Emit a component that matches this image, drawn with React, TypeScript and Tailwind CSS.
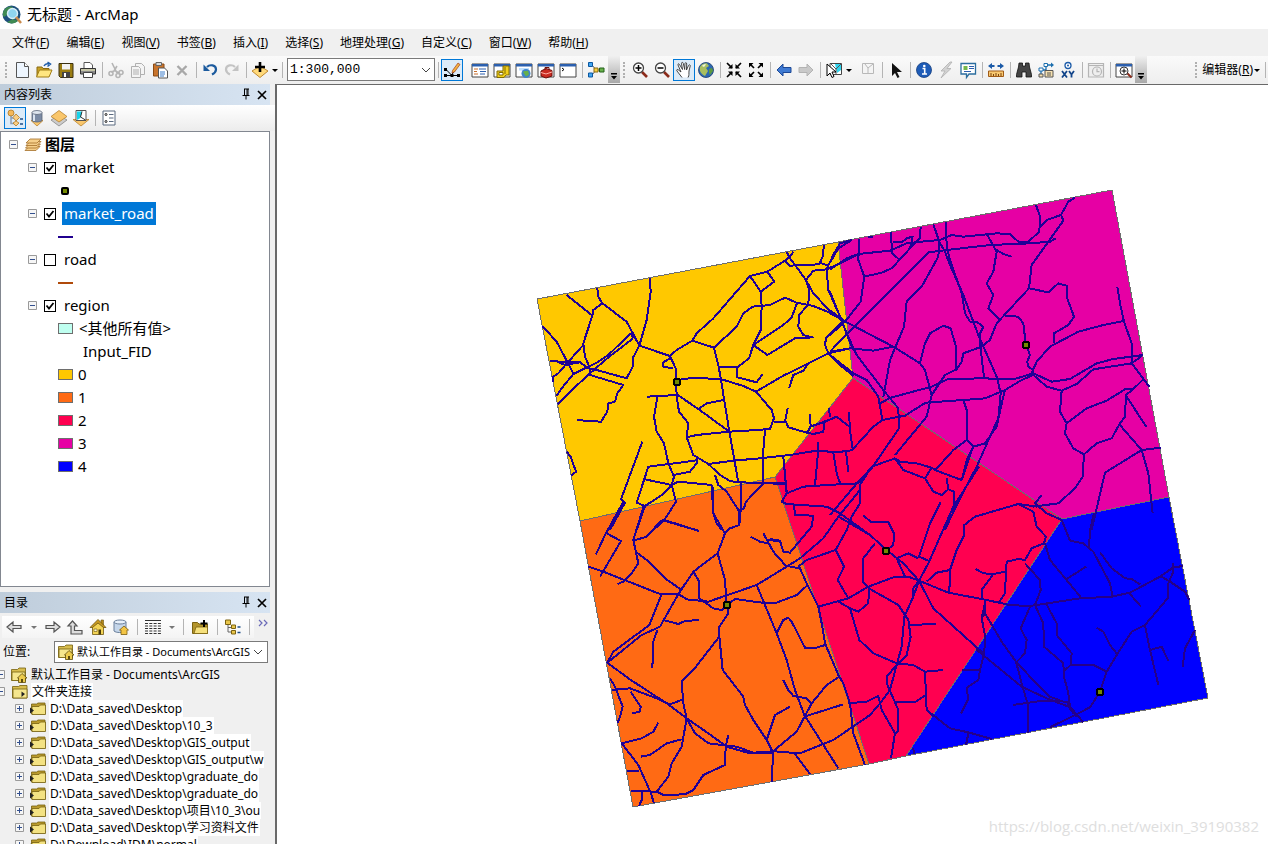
import React, { useState } from 'react';
import type { ReactNode } from 'react';

interface Layer {
  name: string;
  visible: boolean;
  symbol?: ReactNode;
}

const uiFont = "font-['Noto_Sans','Noto_Sans_CJK_SC',sans-serif]";

const menus = [
  ['文件', 'F'],
  ['编辑', 'E'],
  ['视图', 'V'],
  ['书签', 'B'],
  ['插入', 'I'],
  ['选择', 'S'],
  ['地理处理', 'G'],
  ['自定义', 'C'],
  ['窗口', 'W'],
  ['帮助', 'H']
];

const classes = [
  { label: '0', color: '#ffc800' },
  { label: '1', color: '#ff6a14' },
  { label: '2', color: '#ff0050' },
  { label: '3', color: '#e600a4' },
  { label: '4', color: '#0000ff' }
];

const folders = [
  { id: 1, path: 'D:\\Data_saved\\Desktop' },
  { id: 2, path: 'D:\\Data_saved\\Desktop\\10_3' },
  { id: 3, path: 'D:\\Data_saved\\Desktop\\GIS_output' },
  { id: 4, path: 'D:\\Data_saved\\Desktop\\GIS_output\\w' },
  { id: 5, path: 'D:\\Data_saved\\Desktop\\graduate_do' },
  { id: 6, path: 'D:\\Data_saved\\Desktop\\graduate_do' },
  { id: 7, path: 'D:\\Data_saved\\Desktop\\项目\\10_3\\ou' },
  { id: 8, path: 'D:\\Data_saved\\Desktop\\学习资料文件' },
  { id: 9, path: 'D:\\Download\\IDM\\normal' }
];

const windowFrame = (
  <>
    <path d="M0 2h16v13H0z" fill="#fff" stroke="#444" />
    <path d="M0 2h16v2.500H0z" fill="#2b5fae" />
  </>
);

const icons: Record<string, ReactNode> = {
  new: (
    <>
      <path d="M2.500 .5h8l4 4v11h-12z" fill="#eef6ff" stroke="#555" />
      <path d="M10.500 .5v4h4" fill="#fff" stroke="#555" />
    </>
  ),
  open: (
    <>
      <path d="M1 5h5l1 1.500h6V14H1z" fill="#c9a227" stroke="#8a6a10" />
      <path d="M3.500 8H16l-3 7H.5z" fill="#ffe680" stroke="#a07c14" />
      <path d="M8 4c1-2 3-2.500 5-2M11.500 0l3 2-3 2.500" fill="none" stroke="#1d5ba8" strokeWidth="1.500" />
    </>
  ),
  save: (
    <>
      <path d="M1 1.500h14v14H2.500L1 14z" fill="#9a7d12" stroke="#3a3010" />
      <path d="M4 2h8v5.500H4z" fill="#f2f2f2" />
      <path d="M4 10h8v5.500H4z" fill="#444" />
      <path d="M6 11h2v4H6z" fill="#fff" />
    </>
  ),
  print: (
    <>
      <path d="M4 7V.5h6l2.500 2.500v4" fill="#fff" stroke="#555" />
      <path d="M.5 6.500h15V12H.5z" fill="#8b8b8b" stroke="#333" />
      <path d="M1 8h14" stroke="#d8d8b0" strokeWidth="1.500" />
      <path d="M3.500 10.500h9v5h-9z" fill="#fff" stroke="#444" />
    </>
  ),
  cut: (
    <g fill="none" stroke="#b5b5b5" strokeWidth="1.600">
      <path d="M4 1l5 10M9 4L6 9l-3 1M6 8l5 3" />
      <circle cx="3" cy="11.500" r="2" />
      <circle cx="13" cy="10.500" r="2" />
      <circle cx="10" cy="13.500" r="2" />
    </g>
  ),
  copy: (
    <g fill="#f4f4f4" stroke="#b0b0b0">
      <path d="M5.500 1.500h6l3 3v8h-9z" />
      <path d="M1.500 4.500h7l2 2v9h-9zM3 8h6M3 10h6M3 12h6" />
    </g>
  ),
  paste: (
    <>
      <path d="M1.500 2h10.500v12H1.500z" fill="#c8742c" stroke="#8a4a14" />
      <path d="M4 .5h5.500v3H4z" fill="#ddd" stroke="#666" />
      <path d="M6.500 6h6l3 3v7h-9z" fill="#fff" stroke="#555" />
      <path d="M8 10h5M8 12h5M8 14h4" stroke="#3d7cc9" />
    </>
  ),
  remove: <path d="M3.500 4l9 9M12.500 4l-9 9" stroke="#a8a8a8" strokeWidth="2.400" />,
  undo: (
    <>
      <path d="M5 5c3-3 9-2 9 2.500 0 2.500-2 4-4 5" fill="none" stroke="#1c5b9e" strokeWidth="2.200" />
      <path d="M1.500 2.500V9H8z" fill="#1c5b9e" />
    </>
  ),
  redo: (
    <>
      <path d="M11 5C8 2 2 3 2 7.500c0 2.500 2 4 4 5" fill="none" stroke="#c3c3c3" strokeWidth="2.200" />
      <path d="M14.500 2.500V9H8z" fill="#c3c3c3" />
    </>
  ),
  add: (
    <>
      <path d="M0 9l8-5 8 5-8 6.500z" fill="#ffd97a" stroke="#c08a32" />
      <path d="M8 0v10M3 5h10" stroke="#000" strokeWidth="2.600" />
    </>
  ),
  editor: (
    <>
      <path d="M1.500 7l6 6 3-4M2 13.500h12" stroke="#000" fill="none" />
      <path d="M8.500 8.500L14 1l2 1.500-5.500 7.500-2.500 1z" fill="#f4b342" stroke="#a13c1a" strokeWidth=".7" />
      <path d="M0 6h3v3H0zM0 12h3v3H0zM6.500 12h3v3h-3zM13 12h3v3h-3z" fill="#000" />
    </>
  ),
  contents: (
    <>
      {windowFrame}
      <path d="M2 7h4M2 9.500h3M2 12h4" stroke="#c96f2c" />
      <path d="M7 7h7M8 9.500h6M8 12h5" stroke="#2b5fae" />
    </>
  ),
  catalog: (
    <>
      {windowFrame}
      <path d="M9 4h6v9h-3l-2 2.500H3V9h6z" fill="#f2cf1d" stroke="#806b00" />
      <path d="M5 10.500h4v2.500H5zM11 5v7" fill="#fff" stroke="#806b00" />
    </>
  ),
  search: (
    <>
      {windowFrame}
      <path d="M3 6h10v2.500H3z" fill="#bfe0ff" />
      <circle cx="10" cy="11.500" r="4.500" fill="#3f84c9" />
      <path d="M7 10c2-2 3 0 5-1.500l1 4-3 2z" fill="#67b04a" />
    </>
  ),
  toolbox: (
    <>
      {windowFrame}
      <path d="M3 9l5-2.500 6 2V14l-6 2-5-2z" fill="#c92b22" stroke="#6d0f0b" />
      <path d="M7 8V5.500h4V8" fill="none" stroke="#6d0f0b" />
      <path d="M3 10.500l5 1.500 6-2" stroke="#ffb0a5" fill="none" />
    </>
  ),
  python: (
    <>
      {windowFrame}
      <path d="M2 6l2 1.500L2 9" fill="none" stroke="#000" />
    </>
  ),
  model: (
    <>
      <path d="M4 3l4 5-4 5M8 8h5" fill="none" stroke="#555" />
      <path d="M.5 .5h4v4h-4zM.5 11h4v4h-4z" fill="#42a5f0" stroke="#0b57a0" />
      <path d="M6 6h4v4H6z" fill="#f5cc3c" stroke="#8a6a10" />
      <path d="M11.500 6H16v4h-4.500z" fill="#67b04a" stroke="#24601a" />
    </>
  ),
  zoomIn: (
    <>
      <path d="M10 10l5 5" stroke="#8b2b1b" strokeWidth="2.600" />
      <circle cx="6.500" cy="6" r="5" fill="#fff" stroke="#444" strokeWidth="1.300" />
      <path d="M3.500 6h6M6.500 3v6" stroke="#000" strokeWidth="1.500" />
    </>
  ),
  zoomOut: (
    <>
      <path d="M10 10l5 5" stroke="#8b2b1b" strokeWidth="2.600" />
      <circle cx="6.500" cy="6" r="5" fill="#fff" stroke="#444" strokeWidth="1.300" />
      <path d="M3.500 6h6" stroke="#000" strokeWidth="1.500" />
    </>
  ),
  pan: (
    <path
      d="M6 15.500L1 9c-1-1.500.5-2 1.500-1L5 10 2 3c-.3-1.500 1-1.500 1.500-.5l3 5-1-6c0-1.500 1.500-1.500 1.800 0l1.400 6L9 1.500c.3-1.500 1.800-1 1.700.5L10.500 8l2-4.500c.7-1.300 2-.7 1.700.6L13 9c-.3 3 .5 4-1 6.500"
      fill="#fff"
      stroke="#333"
      strokeWidth=".9"
    />
  ),
  globe: (
    <>
      <circle cx="8" cy="8" r="7.500" fill="#2d68b2" stroke="#1b3b6b" strokeWidth=".8" />
      <path d="M2 5c2-4 6-4 7-3.500l2 2.500-3 2 2 3-3 5C3 12 1 9 2 5z" fill="#a9bf5e" />
      <path d="M11 7l3-1 1 3-3 4-1-2z" fill="#5d9a3e" />
      <path d="M4 4c1-1.500 3-2 4-1.500L6 5z" fill="#eef4dc" />
    </>
  ),
  fixedIn: (
    <>
      <path d="M1 1l5 5M15 1l-5 5M1 15l5-5M15 15l-5-5" stroke="#000" strokeWidth="1.700" />
      <path d="M6.500 2v4.500H2zM9.500 2v4.500H14zM6.500 14V9.500H2zM9.500 14V9.500H14z" />
    </>
  ),
  fixedOut: (
    <>
      <path d="M2 2l4 4M14 2l-4 4M2 14l4-4M14 14l-4-4" stroke="#000" strokeWidth="1.700" />
      <path d="M1 5.500V1h4.500zM15 5.500V1h-4.500zM1 10.500V15h4.500zM15 10.500V15h-4.500z" />
    </>
  ),
  prev: <path d="M1 8l6-6v3.500h8v5H7V14z" fill="#3f7ad2" stroke="#1c4896" />,
  next: <path d="M15 8L9 2v3.500H1v5h8V14z" fill="#c9c9c9" stroke="#b3b3b3" />,
  select: (
    <>
      <path d="M4 1.500h11.500v11H4z" fill="#fff" stroke="#444" />
      <path d="M9 2h6v6l-4 3z" fill="#2fd4ee" />
      <path d="M5 2l5 5 5-5M10 7v5" fill="none" stroke="#555" />
      <path d="M1 2v12l3-3 2 4.500 2-1L6 10h4z" fill="#fff" stroke="#000" />
    </>
  ),
  clear: <path d="M2.500 1.500h11v10h-11zM5 2l3 4 5-4M8 6v5" fill="#f4f4f4" stroke="#b8b8b8" />,
  pointer: <path d="M4 1v13l3-3 2.500 5 2-1-2.500-5H14z" fill="#111" />,
  info: (
    <>
      <circle cx="8" cy="8" r="7.500" fill="#1e5cb8" stroke="#143d7d" strokeWidth=".8" />
      <circle cx="8.300" cy="4" r="1.300" fill="#fff" />
      <path d="M6.500 6.500h2.200V12M6 12h5" fill="none" stroke="#fff" strokeWidth="1.600" />
    </>
  ),
  bolt: <path d="M12 0L3 9h4l-4 7 10-9.500H9L14 0z" fill="#d2d2d2" stroke="#b0b0b0" strokeWidth=".8" />,
  popup: (
    <>
      <path d="M1 1.500h14.500V12H9l-2.500 3.500V12H1z" fill="#fff" stroke="#2b6d9e" strokeWidth="1.300" />
      <path d="M3.500 4h4v4h-4z" fill="#74b74a" />
      <path d="M9 4.500h5M9 6.500h5M4 9.500h7" stroke="#2b5fae" />
    </>
  ),
  measure: (
    <>
      <path d="M2 4h4.500M9.500 4H14" stroke="#1c5ba8" strokeWidth="1.800" />
      <path d="M0 4l4-3v6zM16 4l-4-3v6z" fill="#1c5ba8" />
      <path d="M.5 9h15v5.500H.5z" fill="#f8c870" stroke="#a05b18" />
      <path d="M3 11v3M5.500 12v2M8 11v3M10.500 12v2M13 11v3" stroke="#7c430c" />
    </>
  ),
  find: (
    <path
      d="M3 1h3.500v3h3V1H13l.5 4 2 7.500V15H10v-5H6v5H.5v-2.500L2.500 5z"
      fill="#444"
      stroke="#111"
      strokeWidth=".8"
    />
  ),
  route: (
    <>
      <path d="M3 13V8H8V3h6" fill="none" stroke="#1c6fae" strokeWidth="1.300" />
      <path d="M13 .5L16 3l-3 2.500z" fill="#1c6fae" />
      <path d="M1 6h4v3H1zM6 1.500h3.500v3H6z" fill="#fff" stroke="#1c6fae" />
      <path d="M7 8.500h8V15H7zM1 12h4v3H1z" fill="#f6e1b0" stroke="#555" />
      <path d="M9 11h4M9 13h4" stroke="#555" />
    </>
  ),
  xy: (
    <>
      <circle cx="8" cy="3.500" r="3" fill="#fff" stroke="#1c5ba8" strokeWidth="1.300" />
      <circle cx="8" cy="3.500" r="1" fill="#1c5ba8" />
      <path d="M2 9l5 6.500M7 9l-5 6.500M9 9l2.500 3.500L14 9M11.500 12v3.500" stroke="#12458a" strokeWidth="1.800" fill="none" />
    </>
  ),
  time: (
    <g fill="#eee" stroke="#b5b5b5" strokeWidth="1.200">
      <path d="M.5 1.500h15V15H.5zM.5 3.500h15" />
      <circle cx="9" cy="9.500" r="4.500" />
      <path d="M9 6.500v3.200h2.500" />
    </g>
  ),
  viewer: (
    <>
      {windowFrame}
      <path d="M11 11l4.500 4.500" stroke="#8b2b1b" strokeWidth="2" />
      <circle cx="8" cy="9" r="4" fill="#fff" stroke="#333" />
      <path d="M5.500 9h5M8 6.500v5" stroke="#000" />
    </>
  ),
  drawingOrder: (
    <>
      <path d="M4 5v8.500h5M4 8h5" fill="none" stroke="#8aa0b8" strokeWidth="1.500" />
      <circle cx="4" cy="3" r="3" fill="#f5b95a" stroke="#b37a22" strokeWidth=".8" />
      <path d="M9 4l3.500 3.500L9 11 6 7.500zM9 11l3 2-3 3-3-3z" fill="#f9cf85" stroke="#b37a22" strokeWidth=".8" />
      <path d="M13 9h3M13 14h3" stroke="#1c4d86" strokeWidth="1.500" />
    </>
  ),
  source: (
    <>
      <path d="M2 10.500h12L8 16z" fill="#f9c66b" stroke="#b98330" strokeWidth=".8" />
      <path d="M3 2.500v8c2 2 8 2 10 0v-8z" fill="#7b8ba5" stroke="#5a6577" strokeWidth=".8" />
      <path d="M5 3v8" stroke="#dbe4f0" strokeWidth="2" />
      <ellipse cx="8" cy="2.500" rx="5" ry="2" fill="#dfe6ef" stroke="#5a6577" strokeWidth=".8" />
    </>
  ),
  visibility: (
    <>
      <path d="M0 10l8-5 8 5-8 6z" fill="#ccc" stroke="#888" strokeWidth=".8" />
      <path d="M0 6.500L8 .5l8 6L8 12z" fill="#f9c66b" stroke="#b98330" strokeWidth=".8" />
    </>
  ),
  selection: (
    <>
      <path d="M0 9.500h16L8 16z" fill="#f9c66b" stroke="#b98330" strokeWidth=".8" />
      <path d="M3 .5h10v10H3z" fill="#fff" stroke="#555" />
      <path d="M4 1.500h5L7.500 8 4 10z" fill="#19d3ea" />
      <path d="M9 1.500L7.500 7l5 3" fill="none" stroke="#333" />
    </>
  ),
  options: (
    <>
      <path d="M2 1h12v14H2z" fill="#fff" stroke="#5a6a80" />
      <path d="M8 4.500h4.500M8 8h4.500M8 11.500h4.500" stroke="#5a6a80" />
      <g fill="none" stroke="#222">
        <circle cx="5" cy="4.500" r="1" />
        <circle cx="5" cy="11.500" r="1" />
      </g>
    </>
  ),
  layers: (
    <g fill="#f6cf8a" stroke="#a5702a" strokeWidth=".8">
      <path d="M0 13.500l4-4h11l-4 4z" />
      <path d="M.5 11l4-4h11l-4 4z" />
      <path d="M1 8.500l4-4h11l-4 4z" />
      <path d="M1 6l4-4h11l-4 4z" />
    </g>
  ),
  back: <path d="M1 8l6-5v3.500h8v3H7V13z" fill="#ddd" stroke="#555" strokeWidth="1.200" />,
  forward: <path d="M15 8L9 3v3.500H1v3h8V13z" fill="#ddd" stroke="#555" strokeWidth="1.200" />,
  up: <path d="M5.500 2L10 7H7.500v4.500H15V15H4V7H1z" fill="#ddd" stroke="#555" strokeWidth="1.200" />,
  home: (
    <>
      <path d="M11 1h2.500v5H11z" fill="#b78a1a" stroke="#6d5510" strokeWidth=".6" />
      <path d="M2.500 7L8 2.500 13.500 7v8.500h-11z" fill="#f3d455" stroke="#6d5510" strokeWidth=".8" />
      <path d="M0 8.500L8 .5l8 8h-2.500L8 4 2.500 8.500z" fill="#c99a20" stroke="#6d5510" strokeWidth=".8" />
      <path d="M8.500 10.500h2.500v5H8.500z" fill="#4a3a0a" />
      <path d="M4 10h3v2.500H4z" fill="#fff8d0" stroke="#6d5510" strokeWidth=".6" />
    </>
  ),
  database: (
    <>
      <path d="M1 3v9c2 2 9 2 12 0V3z" fill="#c5d6ea" stroke="#6a7f9a" />
      <ellipse cx="7" cy="3" rx="6" ry="2" fill="#e8f0fa" stroke="#6a7f9a" />
      <path d="M6.500 11L11 7l4.500 4H14v4.500H8V11z" fill="#f3c545" stroke="#7b5d10" strokeWidth=".8" />
    </>
  ),
  table: (
    <>
      <path d="M0 1.500h16" stroke="#333" />
      <path
        d="M0 4.500h16M0 7h16M0 9.500h16M0 12h16M0 14.500h16"
        stroke="#333"
        strokeWidth="1.200"
        strokeDasharray="3 1.300"
      />
    </>
  ),
  connect: (
    <>
      <path d="M.5 3.500h5L7 5h8.500v9.500H.5z" fill="#b3942a" stroke="#7b6210" />
      <path d="M2 14.500L4 8h11.500v6.500z" fill="#f5e07c" stroke="#7b6210" strokeWidth=".8" />
      <path d="M12 1v7M8.500 4.500h7" stroke="#000" strokeWidth="2" />
    </>
  ),
  tree: (
    <>
      <path d="M3 5v8h5M3 8.500h5" fill="none" stroke="#666" />
      <path d="M.5 1h5v4.500h-5zM6.500 6h4v3.500h-4zM6.500 11.500h4V15h-4z" fill="#e9c64b" stroke="#7b6210" />
      <path d="M12.500 8h3M12.500 13.500h3" stroke="#1c4d86" strokeWidth="1.500" />
    </>
  ),
  folder: (
    <>
      <path d="M1.500 3h5L8 2h7v11H1.500z" fill="#b99a2c" stroke="#75600f" strokeWidth=".8" />
      <path d="M2 5.500h7L10.500 4H15.500v9.500H2z" fill="#f3e283" stroke="#75600f" strokeWidth=".8" />
      <path d="M0 6.500l4 3-4 3z" fill="#222" />
    </>
  ),
  folderHome: (
    <>
      <path d="M.5 2.500h6L8 1h6.500v12.500H.5z" fill="#d8bd4e" stroke="#75600f" strokeWidth=".8" />
      <path d="M1 5h13v8.500H1z" fill="#f5e68d" stroke="#75600f" strokeWidth=".8" />
      <path d="M6.500 11L11 6.500 16 11h-1.500v4.500h-7V11z" fill="#eccb4c" stroke="#5c4a0c" strokeWidth=".8" />
      <path d="M10 12h2v3.500h-2z" fill="#5c4a0c" />
    </>
  ),
  folderLinks: (
    <>
      <path d="M.5 2.500h6L8 1.500h7V14H.5z" fill="#d8bd4e" stroke="#75600f" strokeWidth=".8" />
      <path d="M1 5h14v9H1z" fill="#f5e68d" stroke="#75600f" strokeWidth=".8" />
      <path d="M9.500 7.500l3.500 2.500-3.500 3z" fill="#222" />
    </>
  )
};

const roadSheets = [
  {
    transform: 'translate(530 230) scale(.33333)',
    d: `M110 195 187 257M202 175 205 200 217 220 190 240 187 257 160 340 165 380 178 410 180 435 280 465 262 490 255 515 235 520 232 545 213 575 175 573 142 570
    M217 220 290 275 328 347 420 378 437 415 440 500 447 545 475 580 470 622 490 675 535 702 570 735 600 753 625 757 765 760
    M360 145 362 185 350 270 328 347 308 385 308 410 290 445 200 420 175 415 150 397 118 395 90 397 78 392 60 392
    M37 288 80 335 110 392 130 430M160 345 115 395 85 430 70 440 68 455M78 393 105 405 150 397
    M302 310 235 375 200 398 130 432 95 475 80 497M310 325 240 378 205 408 178 432 120 485 83 522M302 310 310 325
    M420 378 440 360 487 332 552 353 567 415 573 450 598 605 625 757M487 332 500 310 550 265 660 138 712 125 765 92 778 82 790 66M770 66 778 82
    M660 138 692 185 695 228 692 300 670 345 657 385 622 412 567 412M712 125 733 155 692 185
    M552 353 620 290 640 250 668 230 720 225 765 203 800 218 850 228 930 260M670 345 760 285 785 262 800 222
    M670 345 712 375 795 325 848 322 820 315 805 290 808 255 835 222 838 180 828 150 850 122 890 118
    M778 82 828 150 850 190 895 238 940 270M765 92 780 107 865 103 870 98 895 107 912 70 930 40 965 30
    M882 45 878 80 870 98M895 107 890 118 895 180 930 260 965 350M890 118 940 95 985 72
    M443 450 490 443 575 448 640 468 678 485 725 540 732 565 720 597 650 602 598 605 500 615 470 622
    M678 485 760 437 830 403 895 370 960 355M832 405 820 422 790 435 777 475M895 370 885 345 888 325 940 270
    M895 370 930 405 970 438M620 412 622 442 680 457 697 433M443 495 505 537 598 605M580 510 530 520 505 537
    M352 500 443 495M382 502 372 560 380 605 402 640 415 700 432 740 425 765 438 815 403 870 370 900M420 385 398 398 400 410 430 415
    M732 577 768 575 775 592 830 608 850 612 880 605 885 570M773 535 765 575M840 553 842 590 830 608
    M705 600 700 660 700 757M535 702 610 692 690 685 780 675 860 662M760 680 770 785
    M355 710 495 692 502 685 500 700 480 725 432 735M355 710 320 818 345 828 320 900
    M345 748 425 765 445 755 545 765 550 850 560 880 575 900M425 765 400 792 345 828M337 635 273 808 285 818 240 900
    M555 735 565 765 590 785 625 840 642 835 648 815 700 760M632 757 632 840 628 885 595 897M110 665 122 680 138 725 122 737M403 870 498 900`
  },
  {
    transform: 'translate(830 180) scale(.33333)',
    d: `M0 248 25 205 65 180M0 268 50 235 85 222 180 212 230 190 275 185 330 180 365 165 400 170 500 160 540 162 565 185 595 185 628 155 630 110 618 75
    M88 178 85 240 103 290 92 365 45 425 0 465M103 290 155 278 185 265 240 205 248 170 230 175 215 187 190 185M182 157 187 220 207 238
    M272 140 270 175 240 205M115 171H130M0 515 50 462 295 217 350 210 480 195 600 190 660 185 677 175
    M310 133 328 185 345 215 360 255 400 345 445 465 500 590 512 640 505 715 480 770 440 860 375 985 345 1050
    M348 125 350 200 360 240 395 340 405 400 420 425M328 185 325 230 275 320 230 365 222 440 180 540 160 650
    M420 425 440 425 460 440 450 460 450 490 462 592M472 165 500 215 490 275 470 310 490 345 475 385 510 420M500 210 520 222 545 230
    M735 53 715 65 693 105 650 120 630 140M693 105 700 122 605 255 597 325 500 430 480 480 455 500 400 520 395 545 380 568 345 585 305 645
    M597 325 655 337 685 310 712 318 710 350 732 410 715 435 672 460 672 490M525 407 565 410 580 430 587 490 600 525 592 545 595 560 610 570
    M0 400 75 440 190 500 270 550 285 570 305 645 290 710 195 825M0 515 60 505 130 512 190 500
    M0 335 50 460 80 525 160 630 205 685 207 745 125 865 85 905 0 1005M0 525 70 580 110 600 145 650 157 720
    M270 550 285 490 300 460 340 437 362 445 378 500 378 568M150 670 182 653 305 620 355 597 460 595 550 598 610 580 665 605 720 597 800 550 850 537 940 525
    M287 668 400 660 465 655 525 630 575 600 610 585 650 620 695 632 740 612 790 568 905 550 958 620M905 550 935 528
    M605 580 620 545 660 500 745 455 820 435 880 423M862 320 870 370 882 425 905 490 905 550
    M695 632 690 695 710 730 705 760 730 805 762 823 758 890 735 925 685 970 610 980M710 730 770 685 830 662 885 628 910 627 940 598
    M910 627 888 645 885 710 868 733 845 775 800 790 762 823M890 650 950 742M868 733 935 810 992 803M935 810 825 878 785 1050M935 810 955 880 968 1000
    M157 720 225 707 287 668M157 720 130 740 68 808M400 660 410 690 410 780 430 800 465 790 500 740 520 650 525 630
    M410 780 370 810 318 868M430 800 410 840 395 900`
  },
  {
    transform: 'translate(570 470) scale(.33333)',
    d: `M160 95 105 195 78 253M110 190 153 213 90 320M222 105 190 210 205 280 185 310 160 335 143 342
    M55 290 100 305 270 372 325 372M197 245 230 270 285 325 335 360M275 150 230 200 190 212M275 150 388 183
    M465 190 430 130 430 50M508 120 508 165 480 175 465 190 443 250 370 305 325 372 270 470
    M443 250 465 330 470 405 475 430 448 470 448 500 370 600 335 635 340 700 350 745M370 305 388 335 388 385 430 415 455 420 470 405
    M325 372 350 388 415 395 560 345 650 290M470 405 495 387 590 400 620 398 680 375 713 345
    M275 372 238 465 130 545 112 578 215 495 270 470M280 450 325 462 345 453 388 450M262 480 250 515 247 595
    M448 500 458 600 520 680 525 705 550 750 590 810 608 845M112 578 175 625 290 700 350 745 415 790 470 830 540 850 608 850
    M350 745 375 790 415 820 500 830 550 848 608 845M125 660 180 655 260 685 300 703 340 688
    M120 625 135 650 158 710 150 740 142 760M182 665 212 710 210 725 187 730M155 820 215 805 250 785 265 758
    M155 820 205 885 243 970 252 1000M170 903 208 903M350 745 335 830 305 880 295 920 260 965M335 808 290 820 240 855 212 860
    M182 963 260 965 280 975 345 973 370 960 400 915 465 885 467 830 475 795M215 967 215 990 207 1008
    M560 345 620 490 650 570 675 660 703 735 805 895M620 490 640 450 655 443 665 455 705 533 740 533 765 525
    M608 845 607 935M590 810 615 735 660 710M608 845 680 785 725 700 710 685 670 678 655 660 640 630
    M703 740 820 703M725 700 770 645 808 620M675 852 720 912M542 200 570 215 595 220M580 190 610 245 650 290M590 210 630 213`
  },
  {
    transform: 'translate(770 370) scale(.33333)',
    d: `M375 265 390 275 440 280 485 293 500 302 575 330 608 232M375 265 400 300 465 325 490 365 515 375 535 358 530 325
    M535 358 552 365 552 405M485 293 465 325M627 290 550 410 475 580 447 632 430 680 403 740 395 830 380 885 360 960 330 1000 300 1035 190 1110 90 1150 0 1143
    M512 397 480 460 447 560 475 572M375 265 305 290 265 340 170 345 100 350 50 370 35 395 50 402 170 410 210 430 300 495 350 540 400 580 447 632
    M305 290 270 345 270 400 245 440 230 480 197 540 222 590 203 630 235 685M50 590 90 565 160 505 205 440 270 360M85 590 110 570 197 540
    M72 405 75 435 130 437 125 470 60 548 40 545 30 512 0 507M50 588 90 595 110 640 145 710 155 760 165 820 205 915 220 940 240 1000 250 1090 285 1185
    M280 437 305 457 355 457 372 490 370 525 350 540M315 520 280 565 278 635 300 657 385 705 415 750 422 800 410 855 380 885 350 920 350 940 375 997 437 995 467 975
    M145 710 235 685 295 650 370 622 420 622 447 632 535 668 635 687 710 703M470 635 500 608 540 600 538 668
    M540 600 560 540 583 495 583 465 615 440 745 402 800 410M380 565 415 550 445 565M380 565 405 620
    M205 695 240 715 265 725 295 700 297 655M240 715 268 810 310 850 380 880 430 885 465 905 520 900M465 905 470 1020 490 1040
    M420 765 497 762M447 632 490 715 640 850M235 1000 290 995 325 978 335 1020 375 1090 363 1165M375 997 385 1020 383 1085 375 1090
    M0 340 45 343M40 260 50 370M145 242 200 247 250 240M143 215 143 260 135 345M190 250 200 310 212 345M228 245 235 305
    M237 127 240 180 248 238M113 190 120 170 165 155 200 140 238 170M177 115 180 140M205 440 240 460 300 495M430 680 430 655 447 632
    M745 402 790 425 800 470 828 500 822 520 785 535 765 570 745 567 710 575 708 605 670 612 640 610 617 597
    M670 612 635 660 635 687M708 605 705 670 685 700M815 375 795 400 830 430 875 450M645 690 645 730`
  }
];

const southEastRoads = `M515 120 540 182 580 190 610 215 660 310 668 350M612 100 600 150 597 205
  M465 190 480 240 575 355M530 297 588 260M630 217 665 265 705 295 725 297 750 313
  M350 375 420 378 570 355 665 350 720 338 810 290 850 262 880 258M720 342 753 380
  M848 250 850 275 835 310 833 355 765 435 725 455 680 525 650 575 630 635 600 682 555 705 480 742M815 290 840 305 885 335 898 360
  M405 250 450 300 452 330 435 375 460 430 462 500 520 550 522 590 535 640 540 680 580 727
  M468 370 500 430 500 465 545 520 542 555 520 575M542 555 610 555 650 575M420 380 392 445 410 480 405 520 378 548
  M620 443 640 455 660 495 682 523M765 435 780 510 805 615M780 510 815 500 835 543M915 450 885 505 878 560
  M285 400 335 485 378 545 395 610 415 680 415 760M258 508 395 620 470 655 535 680 560 710M378 545 420 590 480 650 520 665
  M368 675 460 662 530 665 550 700M285 370 275 415 285 465 283 520 270 570 265 600 232 622 233 660 213 700M215 570 270 570
  M110 690 180 745 235 757 305 777M235 760 228 795M70 805 72 822M285 400 275 415`;

const regions = [
  { points: '537,299 838,242 853,378 775,477 580,521', fill: '#ffc800' },
  { points: '580,521 775,477 869,764 633,807', fill: '#ff6a14' },
  { points: '853,378 1062,519 906,756 869,764 775,477', fill: '#ff0050' },
  { points: '838,242 1112,190 1169,497 1062,519 853,378', fill: '#e600a4' },
  { points: '1062,519 1169,497 1208,698 906,756', fill: '#0000ff' }
];

const markets = [
  [677, 382],
  [1026, 345],
  [886, 551],
  [727, 605],
  [1100, 692]
];

function Icon({ name }: { name: string }) {
  return (
    <svg viewBox="0 0 16 16" className="size-4 shrink-0 overflow-visible" aria-hidden="true">
      {icons[name]}
    </svg>
  );
}

function Tool({ name, active }: { name: string; active?: boolean }) {
  return (
    <button
      aria-label={name}
      className={`flex h-[22px] w-[22px] shrink-0 items-center justify-center border ${
        active ? 'border-[#0078d7] bg-[#dcebf8]' : 'border-transparent'
      }`}
    >
      <Icon name={name} />
    </button>
  );
}

function Separator() {
  return (
    <span className="flex h-4 w-[6px] shrink-0 justify-center">
      <span className="w-px bg-[#b4b4b4]" />
    </span>
  );
}

function Arrow({ faded }: { faded?: boolean }) {
  return (
    <svg viewBox="0 0 8 16" className="h-4 w-2 shrink-0">
      <path d="M1 7h6L4 10z" fill={faded ? '#777' : '#000'} />
    </svg>
  );
}

function Grip() {
  return <span className="mx-[3px] h-4 w-[3px] shrink-0 border-l-2 border-dotted border-[#b0b0b0]" />;
}

function Overflow() {
  return (
    <button
      aria-label="more"
      className="flex h-[27px] w-3 shrink-0 items-end justify-center bg-linear-to-b from-[#f0f0f0] to-[#a8a8a8]"
    >
      <svg viewBox="0 0 8 10" className="mb-[2px] h-[10px] w-2">
        <path d="M1 2h6v1.500H1zM1 5h6L4 8.500z" />
      </svg>
    </button>
  );
}

function Chevron() {
  return (
    <svg viewBox="0 0 10 10" className="pointer-events-none absolute top-1/2 right-1 size-[10px] -translate-y-1/2">
      <path d="M1 3l4 4 4-4" fill="none" stroke="#444" />
    </svg>
  );
}

function Toggle({ open }: { open?: boolean }) {
  return (
    <button aria-label={open ? 'collapse' : 'expand'} className="size-[9px] shrink-0">
      <svg viewBox="0 0 9 9" className="size-[9px]">
        <path d="M.5 .5h8v8h-8z" fill="#f6f6f6" stroke="#9a9a9a" />
        <path d={open ? 'M2 4.500h5' : 'M2 4.500h5M4.500 2v5'} stroke="#33508f" />
      </svg>
    </button>
  );
}

function PanelTitle({ title }: { title: string }) {
  return (
    <div className="mr-[5px] flex h-[21px] shrink-0 items-center bg-linear-to-r from-[#bfcddb] to-[#d7e4f2] pl-1 text-xs">
      <h2 className="flex-1">{title}</h2>
      <button aria-label="pin" className="size-4">
        <svg viewBox="0 0 16 16" className="size-4">
          <path d="M6 2h5M6.500 2v6M10 2v6M9 2v6M4.500 8.500h7M8 9v3.500" stroke="#000" fill="none" />
        </svg>
      </button>
      <button aria-label="close" className="size-4">
        <svg viewBox="0 0 16 16" className="size-4">
          <path d="M4 4l8 8M12 4l-8 8" stroke="#000" strokeWidth="1.700" />
        </svg>
      </button>
    </div>
  );
}

function LayerRow({ layer, selected, onSelect }: { layer: Layer; selected: boolean; onSelect: () => void }) {
  return (
    <li>
      <div className="flex h-[23px] items-center pl-[27px]">
        <Toggle open />
        <span className="relative ml-[7px] size-3 shrink-0">
          <input
            id={layer.name}
            type="checkbox"
            defaultChecked={layer.visible}
            className="peer block size-3 appearance-none border border-black bg-white"
          />
          <svg viewBox="0 0 12 12" className="pointer-events-none absolute inset-0 hidden size-3 peer-checked:block">
            <path d="M2.500 5.500l2.500 3 4.500-5.500" fill="none" stroke="#000" strokeWidth="1.800" />
          </svg>
        </span>
        <label
          htmlFor={layer.name}
          onClick={onSelect}
          className={`ml-[6px] px-[2px] leading-[23px] ${selected ? 'bg-[#0078d7] text-white' : ''}`}
        >
          {layer.name}
        </label>
      </div>
      {layer.symbol && <div className="flex h-[23px] items-center pl-[57px]">{layer.symbol}</div>}
    </li>
  );
}

const layers: Layer[] = [
  {
    name: 'market',
    visible: true,
    symbol: <span className="ml-[3px] size-2 rounded-xs border-2 border-black bg-[#738a00]" />
  },
  { name: 'market_road', visible: true, symbol: <span className="h-[2px] w-[15px] bg-[#20008f]" /> },
  { name: 'road', visible: false, symbol: <span className="h-[2px] w-[15px] bg-[#b04a0a]" /> },
  { name: 'region', visible: true }
];

function ContentsPanel() {
  const [selected, setSelected] = useState('market_road');

  return (
    <section className="flex h-[503px] shrink-0 flex-col">
      <PanelTitle title="内容列表" />
      <div className="flex h-[26px] shrink-0 items-center bg-linear-to-b from-white to-[#ececec] pl-1">
        <Tool name="drawingOrder" active />
        <Tool name="source" />
        <Tool name="visibility" />
        <Tool name="selection" />
        <Separator />
        <Tool name="options" />
      </div>
      <div className="mr-[5px] flex-1 border border-[#828790] bg-white pt-px text-[15px]">
        <div className="flex h-[23px] items-center pl-2 font-bold">
          <Toggle open />
          <span className="mr-1 ml-[7px] flex">
            <Icon name="layers" />
          </span>
          图层
        </div>
        <ul>
          {layers.map((layer) => (
            <LayerRow
              key={layer.name}
              layer={layer}
              selected={selected === layer.name}
              onSelect={() => setSelected(layer.name)}
            />
          ))}
        </ul>
        <div className="flex h-[23px] items-center pl-[57px] text-[15px]">
          <span className="mr-[6px] h-[11px] w-[15px] border border-[#6e6e6e] bg-[#bffff0]" />
          &lt;其他所有值&gt;
        </div>
        <div className="h-[23px] pl-[82px] text-[15px] leading-[23px]">Input_FID</div>
        {classes.map((item) => (
          <div key={item.label} className="flex h-[23px] items-center pl-[57px] text-[15px]">
            <span
              className="mr-[5px] h-[11px] w-[15px] border border-[#6e6e6e]"
              style={{ backgroundColor: item.color }}
            />
            {item.label}
          </div>
        ))}
      </div>
    </section>
  );
}

function CatalogPanel() {
  return (
    <section className="mt-[5px] flex min-h-0 flex-1 flex-col text-xs">
      <PanelTitle title="目录" />
      <div className="mt-[3px] flex h-[22px] shrink-0 items-center">
        <div className="ml-[2px] flex h-full w-[252px] items-center bg-linear-to-b from-white to-[#f4f4f4] pl-px">
          <Tool name="back" />
          <span className="mr-1 ml-[5px] flex">
            <Arrow faded />
          </span>
          <Tool name="forward" />
          <Tool name="up" />
          <span className="mx-px flex">
            <Tool name="home" />
          </span>
          <Tool name="database" />
          <span className="mx-[2px] flex">
            <Separator />
          </span>
          <Tool name="table" />
          <span className="mx-1 flex">
            <Arrow faded />
          </span>
          <Separator />
          <span className="mx-[3px] flex">
            <Tool name="connect" />
          </span>
          <Separator />
          <span className="mx-[2px] flex">
            <Tool name="tree" />
          </span>
          <Separator />
        </div>
        <button aria-label="more tools" className="ml-1">
          <svg viewBox="0 0 10 8" className="mb-2 h-2 w-[10px]">
            <path d="M1 1l3 3-3 3M6 1l3 3-3 3" fill="none" stroke="#6a6ab8" strokeWidth="1.200" />
          </svg>
        </button>
      </div>
      <div className="mt-[3px] mr-[7px] flex h-[22px] shrink-0 items-center pl-[3px]">
        <label htmlFor="location" className="w-[51px]">
          位置:
        </label>
        <div className="relative flex h-[22px] min-w-0 flex-1 items-center border border-[#7a7a7a] bg-white pl-[3px]">
          <Icon name="folderHome" />
          <select id="location" className="ml-[3px] h-full min-w-0 flex-1 appearance-none bg-transparent pr-4 text-[11px]">
            <option>默认工作目录 - Documents\ArcGIS</option>
          </select>
          <Chevron />
        </div>
      </div>
      <ul className="mt-[3px] mr-2 min-h-0 flex-1 overflow-hidden whitespace-nowrap">
        <li className="flex h-[17px] items-center">
          <span className="-ml-1 flex">
            <Toggle open />
          </span>
          <span className="mr-1 ml-[6px] flex">
            <Icon name="folderHome" />
          </span>
          默认工作目录 - Documents\ArcGIS
        </li>
        <li className="flex h-[17px] items-center">
          <span className="-ml-1 flex">
            <Toggle open />
          </span>
          <span className="mr-[3px] ml-[7px] flex">
            <Icon name="folderLinks" />
          </span>
          <span className="bg-white px-px leading-[17px]">文件夹连接</span>
        </li>
        {folders.map((folder) => (
          <li key={folder.id} className="flex h-[17px] items-center pl-[15px]">
            <Toggle />
            <span className="mr-[3px] ml-[6px] flex">
              <Icon name="folder" />
            </span>
            <span className="bg-white px-px leading-[17px]">{folder.path}</span>
          </li>
        ))}
      </ul>
    </section>
  );
}

function MapView() {
  return (
    <main className="relative min-w-0 flex-1 overflow-hidden border-t border-l-2 border-[#696969] bg-white">
      <svg viewBox="277 85 991 759" className="block w-full" role="img" aria-label="market_road">
        <g shapeRendering="crispEdges">
          {regions.map((region) => (
            <polygon key={region.fill} points={region.points} fill={region.fill} stroke="#6e6e6e" />
          ))}
          <g fill="none" strokeWidth="6" strokeLinejoin="round">
            <path d={southEastRoads} transform="translate(890 480) scale(.33333)" stroke="#250088" />
            {roadSheets.map((sheet) => (
              <path key={sheet.transform} d={sheet.d} transform={sheet.transform} stroke="#1f0096" />
            ))}
          </g>
          {markets.map(([x, y]) => (
            <g key={x}>
              <path d={`M${x - 3} ${y - 4}h6v1h1v6h-1v1h-6v-1h-1v-6h1z`} fill="#000" />
              <path d={`M${x - 2} ${y - 2}h4v4h-4z`} fill="#738a00" />
            </g>
          ))}
        </g>
      </svg>
      <p className="absolute right-[9px] bottom-[7px] font-['Open_Sans',sans-serif] text-[15px] leading-[22px] text-[#dedede]">
        https://blog.csdn.net/weixin_39190382
      </p>
    </main>
  );
}

function Toolbar() {
  return (
    <div className="flex h-7 shrink-0 items-center bg-linear-to-b from-[#fafafa] to-[#eeeeee] pb-px pl-[2px]">
      <Grip />
      <Tool name="new" />
      <Tool name="open" />
      <Tool name="save" />
      <Tool name="print" />
      <Separator />
      <Tool name="cut" />
      <Tool name="copy" />
      <Tool name="paste" />
      <Tool name="remove" />
      <Separator />
      <Tool name="undo" />
      <Tool name="redo" />
      <Separator />
      <Tool name="add" />
      <Arrow />
      <Separator />
      <div className="relative ml-[2px] h-[23px] w-[148px] shrink-0">
        <select
          aria-label="scale"
          className="block h-full w-full appearance-none border border-[#7a7a7a] bg-white pl-[2px] font-['Liberation_Mono',monospace] text-[13px]"
        >
          <option>1:300,000</option>
        </select>
        <Chevron />
      </div>
      <Separator />
      <Tool name="editor" active />
      <span className="w-[6px] shrink-0" />
      <Tool name="contents" />
      <Tool name="catalog" />
      <Tool name="search" />
      <Tool name="toolbox" />
      <Tool name="python" />
      <Separator />
      <Tool name="model" />
      <span className="w-px shrink-0" />
      <Overflow />
      <Grip />
      <Tool name="zoomIn" />
      <Tool name="zoomOut" />
      <Tool name="pan" active />
      <Tool name="globe" />
      <Separator />
      <Tool name="fixedIn" />
      <Tool name="fixedOut" />
      <Separator />
      <Tool name="prev" />
      <Tool name="next" />
      <Separator />
      <Tool name="select" />
      <Arrow />
      <span className="w-1 shrink-0" />
      <Tool name="clear" />
      <Separator />
      <Tool name="pointer" />
      <Separator />
      <Tool name="info" />
      <Tool name="bolt" />
      <Tool name="popup" />
      <Separator />
      <Tool name="measure" />
      <Separator />
      <Tool name="find" />
      <Tool name="route" />
      <Tool name="xy" />
      <Separator />
      <Tool name="time" />
      <Separator />
      <Tool name="viewer" />
      <Overflow />
      <div className="ml-auto flex items-center">
        <Grip />
        <button className="flex items-center pr-px pl-px text-xs whitespace-nowrap">
          编辑器(<u>R</u>)
          <Arrow />
        </button>
        <Separator />
      </div>
    </div>
  );
}

export default function App() {
  return (
    <div className={`flex h-screen flex-col overflow-hidden bg-[#f0f0f0] text-black ${uiFont}`}>
      <header className="flex h-[29px] shrink-0 items-center bg-white pl-[2px]">
        <svg viewBox="0 0 20 20" className="size-5">
          <circle cx="9.500" cy="9.500" r="9" fill="#1d4f7c" />
          <path d="M2 5c3-4 7-4 9-3L8 6l-3 4-3 2C0 10 1 7 2 5zM5 17l6-3 5 2c-3 3-8 3-11 1z" fill="#3f8a52" />
          <circle cx="10.500" cy="8.500" r="5" fill="#8fd4ee" stroke="#d7eef8" strokeWidth="1.500" />
          <path d="M14 12l5 6" stroke="#c98a4c" strokeWidth="2.500" />
        </svg>
        <h1 className="ml-[5px] text-[15px]">无标题 - ArcMap</h1>
      </header>
      <nav className="flex h-[27px] shrink-0 items-center gap-[17px] pl-3 text-xs">
        {menus.map(([label, key]) => (
          <button key={key} className="whitespace-nowrap">
            {label}(<u>{key}</u>)
          </button>
        ))}
      </nav>
      <Toolbar />
      <div className="flex min-h-0 flex-1">
        <aside className="flex w-[275px] shrink-0 flex-col">
          <ContentsPanel />
          <CatalogPanel />
        </aside>
        <MapView />
      </div>
    </div>
  );
}
